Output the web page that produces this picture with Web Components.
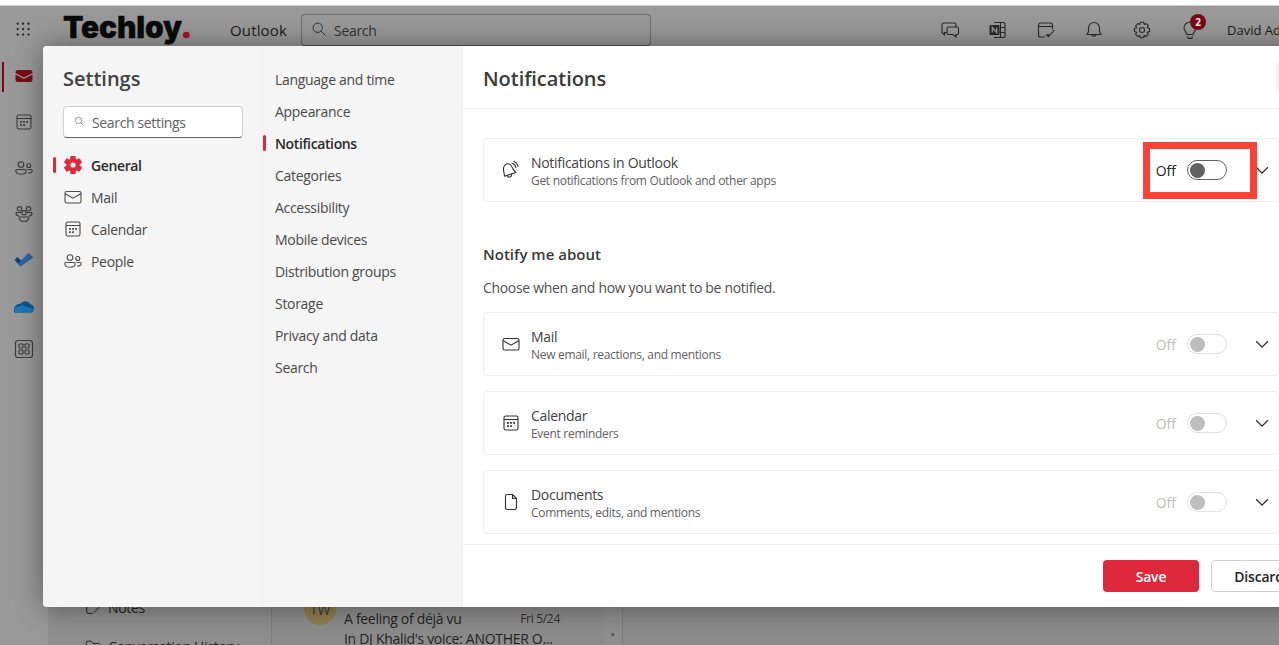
<!DOCTYPE html>
<html lang="en"><head><meta charset="utf-8"><title>Outlook settings</title>
<style>
html,body{margin:0;padding:0;height:100%;overflow:hidden;background:#fff}
body{font-family:"Open Sans","Liberation Sans",sans-serif;letter-spacing:-.3px;color:#323130}
</style></head><body>
<app-shell></app-shell>
<script>
function gearPath(){
  const pts=[];const P=(r,a)=>{const t=a*Math.PI/180;return (10+r*Math.cos(t)).toFixed(2)+' '+(10+r*Math.sin(t)).toFixed(2);};
  for(let i=0;i<6;i++){const c=-90+i*60;pts.push(P(6.6,c-26),P(9.4,c-15),P(9.4,c+15),P(6.6,c+26));}
  return 'M'+pts.join('L')+'ZM10 7.400A2.600 2.600 0 1 0 10 12.600 2.600 2.600 0 0 0 10 7.400Z';
}
const ICONS={
 grid:'<g fill="currentColor"><circle cx="3" cy="3" r="1.25"/><circle cx="9" cy="3" r="1.25"/><circle cx="15" cy="3" r="1.25"/><circle cx="3" cy="9" r="1.25"/><circle cx="9" cy="9" r="1.25"/><circle cx="15" cy="9" r="1.25"/><circle cx="3" cy="15" r="1.25"/><circle cx="9" cy="15" r="1.25"/><circle cx="15" cy="15" r="1.25"/></g>',
 search:'<g fill="none" stroke="currentColor" stroke-width="1.1"><circle cx="7.500" cy="7.500" r="5.200"/><path d="M11.300 11.300 16 16"/></g>',
 chat:'<g fill="none" stroke="currentColor" stroke-width="1.100"><path d="M7 12.500H4.500V15L2 12.500V4.500A1.500 1.500 0 0 1 3.500 3H14.500A1.500 1.500 0 0 1 16 4.500V7"/><path d="M8.500 7H17A1.500 1.500 0 0 1 18.500 8.500V13A1.500 1.500 0 0 1 17 14.500H16V17L13 14.500H8.500A1.500 1.500 0 0 1 7 13V8.500A1.500 1.500 0 0 1 8.500 7Z"/></g>',
 onenote:'<g fill="none" stroke="currentColor" stroke-width="1.100"><path d="M6 2.500H16A1 1 0 0 1 17 3.500V16.500A1 1 0 0 1 16 17.500H6"/><path d="M12.500 2.500V17.500M12.500 7.500H17M12.500 12.500H17"/></g><rect x="1.500" y="5" width="10" height="10" rx="1" fill="currentColor"/><path d="M4.300 12.500V7.500L8.700 12.500V7.500" fill="none" stroke="#999" stroke-width="1.300"/>',
 taskcal:'<g fill="none" stroke="currentColor" stroke-width="1.100"><path d="M9 17H4.500A2 2 0 0 1 2.500 15V5A2 2 0 0 1 4.500 3H14.500A2 2 0 0 1 16.500 5V9.500"/><path d="M2.500 6.500H16.500"/><path d="M10 14.500 12.300 16.800 18.500 10M11.500 14 13 15.500"/></g>',
 bell:'<g fill="none" stroke="currentColor" stroke-width="1.100"><path d="M10 2.500A5.500 5.500 0 0 0 4.500 8V11.500L3 14.500H17L15.500 11.500V8A5.500 5.500 0 0 0 10 2.500Z" stroke-linejoin="round"/><path d="M7.800 14.500A2.300 2.300 0 0 0 12.200 14.500"/></g>',
 gear:'<g fill="none" stroke="currentColor" stroke-width="1.100" stroke-linejoin="round"><path d="M8.300 2.300H11.700L12.200 4.500 14.300 3.600 16.400 5.900 15.200 7.800 17.600 8.500V11.500L15.200 12.200 16.400 14.100 14.300 16.400 12.200 15.500 11.700 17.700H8.300L7.800 15.500 5.700 16.400 3.600 14.100 4.800 12.200 2.400 11.500V8.500L4.800 7.800 3.600 5.900 5.700 3.600 7.800 4.500Z"/><circle cx="10" cy="10" r="2.500"/></g>',
 bulb:'<g fill="none" stroke="currentColor" stroke-width="1.100"><path d="M7 14.500C7 12.500 4 11.500 4 8A6 6 0 0 1 16 8C16 11.500 13 12.500 13 14.500Z"/><path d="M7.500 16.500A2.500 2 0 0 0 12.500 16.500"/></g>',
 mailfill:'<path d="M1.500 6.500A2.500 2.500 0 0 1 4 4H16A2.500 2.500 0 0 1 18.500 6.500V7L10 11.500 1.500 7Z" fill="currentColor"/><path d="M1.500 8.600 10 13 18.500 8.600V13.500A2.500 2.500 0 0 1 16 16H4A2.500 2.500 0 0 1 1.500 13.500Z" fill="currentColor"/>',
 mail:'<g fill="none" stroke="currentColor" stroke-width="1.100"><rect x="2" y="4.500" width="16" height="11.500" rx="1.800"/><path d="M2.300 6.800 10 11.200 17.700 6.800"/></g>',
 cal:'<g fill="none" stroke="currentColor" stroke-width="1.100"><rect x="3" y="3" width="14" height="14" rx="1.800"/><path d="M3 6.500H17"/></g><g fill="currentColor"><rect x="6" y="9" width="1.800" height="1.800"/><rect x="9.100" y="9" width="1.800" height="1.800"/><rect x="12.200" y="9" width="1.800" height="1.800"/><rect x="6" y="12.200" width="1.800" height="1.800"/><rect x="9.100" y="12.200" width="1.800" height="1.800"/></g>',
 people:'<g fill="none" stroke="currentColor" stroke-width="1.100"><circle cx="7" cy="6.500" r="2.800"/><circle cx="14.800" cy="7.500" r="2"/><path d="M1.800 12.800A1.300 1.300 0 0 1 3 11.500H11A1.300 1.300 0 0 1 12.200 12.800C12.200 15 10 16.300 7 16.300S1.800 15 1.800 12.800Z"/><path d="M13.500 11.500H17A1.200 1.200 0 0 1 18.200 12.700C18.200 14.300 16.500 15.200 14 15"/></g>',
 groups:'<g fill="none" stroke="currentColor" stroke-width="1.100"><circle cx="5.500" cy="4.800" r="2.200"/><circle cx="14.500" cy="4.800" r="2.200"/><circle cx="10" cy="8.800" r="2.200"/><path d="M6 13H14A.8.8 0 0 1 14.800 13.800C14.800 16 12.800 17.500 10 17.500S5.200 16 5.200 13.800A.8.8 0 0 1 6 13Z"/><path d="M7 8.500H2.800A.8.8 0 0 0 2 9.300C2 11 3.500 12 5 12M13 8.500H17.200A.8.8 0 0 1 18 9.300C18 11 16.500 12 15 12"/></g>',
 apps:'<g fill="none" stroke="currentColor" stroke-width="1.200"><rect x="1.500" y="1.500" width="17" height="17" rx="2.500"/><rect x="5" y="5" width="4" height="4" rx=".8"/><rect x="11" y="5" width="4" height="4" rx=".8"/><rect x="5" y="11" width="4" height="4" rx=".8"/><rect x="11" y="11" width="4" height="4" rx=".8"/></g>',
 todo:'<path d="M.5 10 3.500 7 8.500 12 6.500 16.500Z" fill="#10407f"/><path d="M6.500 16.500 3.800 13.800 14.500 3 19.500 7.500Z" fill="#2a66a6"/>',
 cloud:'<path d="M3.500 16.500A3 3 0 0 1 1 11 4 4 0 0 1 6 8 6 6 0 0 1 16.300 8.300 4.200 4.200 0 0 1 19.800 13 3.500 3.500 0 0 1 17 16.500Z" fill="#0f568f"/><path d="M3.500 16.500A3 3 0 0 1 1 11.500L8.500 9.200 19.800 13A3.500 3.500 0 0 1 17 16.500Z" fill="#1878b8"/>',
 gearfill:'<path fill-rule="evenodd" d="'+gearPath()+'" fill="currentColor"/>',
 ring:'<g fill="none" stroke="currentColor" stroke-width="1.100" stroke-linejoin="round" stroke-linecap="round"><path d="M3 12.500C1.500 8.500 3 4.500 6 3.800 9 3.200 10.500 5.500 11.500 8 12.300 10 13.500 11.500 15 12.500L3.500 16.200Z"/><path d="M6 15.400A2.300 2.300 0 0 0 10.500 14"/><path d="M11 3.200A6 6 0 0 1 15 7.800M13 1.200A8 8 0 0 1 17 6.300"/></g>',
 doc:'<path d="M6 2.500H11.500L15.500 6.500V15.500A2 2 0 0 1 13.500 17.500H6.500A2 2 0 0 1 4.500 15.500V4A1.500 1.500 0 0 1 6 2.500ZM11.500 2.500V6.500H15.500" fill="none" stroke="currentColor" stroke-width="1.100" stroke-linejoin="round"/>',
 chev:'<path d="M3.500 7 10 13.500 16.500 7" fill="none" stroke="currentColor" stroke-width="1.500"/>',
 note:'<g fill="none" stroke="currentColor" stroke-width="1.100"><path d="M9 16H4.500A1.500 1.500 0 0 1 3 14.500V4.500A1.500 1.500 0 0 1 4.500 3H14.500A1.500 1.500 0 0 1 16 4.500V8"/><path d="M10 16 17 9"/></g>',
 folder:'<path d="M2.500 16V5A1.500 1.500 0 0 1 4 3.500H8L10 6H16A1.500 1.500 0 0 1 17.500 7.500V16" fill="none" stroke="currentColor" stroke-width="1.100"/>'
};
function def(name,css,html,init){
  customElements.define(name,class extends HTMLElement{
    constructor(){super();const s=this.attachShadow({mode:'open'});const t=document.createElement('template');t.innerHTML='<style>'+css+'</style>'+(typeof html==='function'?html(this):html);s.appendChild(t.content.cloneNode(true));}
    connectedCallback(){ if(init&&!this._i){this._i=1;init(this,this.shadowRoot);} }
  });
}
def('x-icon',':host{display:inline-flex;flex:none;width:var(--s,20px);height:var(--s,20px)}svg{width:100%;height:100%;display:block}','<svg viewBox="0 0 20 20" aria-hidden="true"></svg>',(h,s)=>{s.querySelector('svg').innerHTML=ICONS[h.getAttribute('n')]||'';});

def('app-header',`:host{display:flex;align-items:center;height:41px;box-sizing:border-box;padding-top:9px;background:#999;color:#111;flex:none;position:relative;box-shadow:inset 0 1px #cfcfcf}
.waffle{margin-left:15px;--s:18px;color:#1c1c1c}
.logo{font:900 30px/26px Inter,"Liberation Sans",sans-serif;letter-spacing:-.2px;-webkit-text-stroke:.3px #0a0a0a;color:#0a0a0a;margin-left:30px;width:167px;flex:none;white-space:nowrap;height:32px}
.logo b{color:#a5101f;-webkit-text-stroke:.6px #a5101f;font-weight:900}
.app{font-size:15px;font-weight:500;width:71px;flex:none;letter-spacing:.15px;color:#1b1a19}
.search{width:348px;height:30px;flex:none;border:1px solid #6f6f6f;border-bottom-color:#555;border-radius:4px;display:flex;align-items:center;gap:5px;font-size:14px;color:#333}
.search x-icon{--s:18px;margin-left:9px;color:#333}
.tools{display:flex;align-items:center;margin-left:275px;flex:none;white-space:nowrap}
.t{width:48px;flex:none;display:flex;justify-content:center;color:#2a2a2a;--s:20px;position:relative}
.badge{position:absolute;left:24px;top:-6px;width:16px;height:16px;border-radius:50%;background:#7a0b16;color:#e9e9e9;font-size:10px;font-weight:700;display:flex;align-items:center;justify-content:center}
.user{font-size:13px;white-space:nowrap;color:#1b1a19;margin-left:13px;letter-spacing:0}`,
`<x-icon class="waffle" n="grid"></x-icon><div class="logo">Techloy<b>.</b></div><div class="app">Outlook</div>
<div class="search"><x-icon n="search"></x-icon><span>Search</span></div>
<div class="tools"><div class="t"><x-icon n="chat"></x-icon></div><div class="t"><x-icon n="onenote"></x-icon></div><div class="t"><x-icon n="taskcal"></x-icon></div><div class="t"><x-icon n="bell"></x-icon></div><div class="t"><x-icon n="gear"></x-icon></div><div class="t"><x-icon n="bulb"></x-icon><span class="badge">2</span></div><div class="user">David&nbsp;Adeleke</div></div>`);

def('app-rail',`:host{display:flex;flex-direction:column;width:48px;flex:none;background:#999;padding-top:20px;box-sizing:border-box;position:relative;color:#3c3c3c}
.i{height:46px;display:flex;justify-content:center;align-items:flex-start;--s:20px;position:relative}
.a{color:#7b0a14}
.a::before{content:"";position:absolute;left:2px;top:-4px;width:2px;height:30px;background:#7b0a14}`,
`<div class="i a"><x-icon n="mailfill"></x-icon></div><div class="i"><x-icon n="cal"></x-icon></div><div class="i"><x-icon n="people"></x-icon></div><div class="i"><x-icon n="groups"></x-icon></div><div class="i"><x-icon n="todo"></x-icon></div><div class="i" style="height:43px"><x-icon n="cloud"></x-icon></div><div class="i"><x-icon n="apps"></x-icon></div>`);

def('folder-pane',`:host{display:flex;flex-direction:column;width:223px;flex:none;background:#8e8e8e;padding:552px 0 0 36px;box-sizing:border-box;gap:20px;font-size:14px;color:#222}
.f{display:flex;align-items:center;gap:6px;height:20px;--s:18px;white-space:nowrap}`,
`<div class="f"><x-icon n="note"></x-icon><span>Notes</span></div><div class="f"><x-icon n="folder"></x-icon><span>Conversation History</span></div>`);

def('message-list',`:host{display:block;width:352px;flex:none;background:#8b8b8b;border-left:1px solid #7c7c7c;border-right:1px solid #7c7c7c;box-sizing:border-box;padding-top:547px;font-size:14px;color:#232323;position:relative}
.row{display:flex;padding-left:32px;gap:8px}
.av{width:32px;height:32px;border-radius:50%;background:#8f7d4d;color:#3a3a3a;display:flex;align-items:center;justify-content:center;font-size:14px;flex:none}
.m{width:216px;padding-top:16px}
.l{display:flex;justify-content:space-between;line-height:20px;white-space:nowrap}
.d{font-size:12px;color:#2e2e2e}
.sb{position:absolute;right:0;top:0;bottom:0;width:18px;background:#8e8e8e;color:#444;font-size:7px;display:flex;align-items:flex-end;justify-content:center;padding-bottom:6px}`,
`<div class="row"><div class="av">TW</div><div class="m"><div class="l"><span>A feeling of déjà vu</span><span class="d">Fri 5/24</span></div><div class="l">In DJ Khalid's voice: ANOTHER O...</div></div></div><div class="sb">▾</div>`);

def('nav-item',`:host{display:flex;align-items:center;height:32px;font-size:14px;color:#4a4948;position:relative;white-space:nowrap;gap:8px;--s:20px}
:host([active]){font-weight:600;color:#2b2a29;letter-spacing:-.38px}
:host([active])::before{content:"";position:absolute;left:var(--bar,-10px);top:8px;width:3px;height:16px;border-radius:2px;background:#e0283c}
::slotted(x-icon){color:#4a4948}
:host([active]) ::slotted(x-icon){color:#e0283c}`,'<slot name="icon"></slot><slot></slot>');

def('settings-search',`:host{display:flex;align-items:center;box-sizing:border-box;width:180px;height:32px;background:#fff;border:1px solid #d1d1d1;border-bottom-color:#616161;border-radius:4px;padding-left:10px;gap:6px;font-size:14px;letter-spacing:-.35px;color:#616161;--s:12px}`,
`<x-icon n="search"></x-icon><span>Search settings</span>`);

def('toggle-switch',`:host{display:flex;align-items:center;gap:11px;font-size:14px;letter-spacing:0;color:#242424}
.tr{width:40px;height:20px;box-sizing:border-box;border:1px solid #616161;border-radius:10px;background:#fff;display:flex;align-items:center;padding-left:2px}
.k{width:15px;height:15px;border-radius:50%;background:#616161}
:host([disabled]){color:#bdbdbd}
:host([disabled]) .tr{border-color:#e0e0e0}
:host([disabled]) .k{background:#bdbdbd}`,
`<span>Off</span><div class="tr"><div class="k"></div></div>`);

def('notif-card',`:host{display:flex;align-items:center;box-sizing:border-box;height:64px;width:796px;border:1px solid #efefef;border-radius:4px;background:#fff;padding-left:17px;position:relative}
.ic{--s:20px;color:#323130;margin-right:10px;width:20px}
.tx{flex:1;min-width:0;padding-top:2px}
.t{font-size:14px;line-height:20px;color:#424242}
.s{font-size:12px;line-height:16px;color:#616161}
.ch{--s:18px;color:#323130;margin-left:26px;margin-right:7px}
toggle-switch{flex:none}`,
h=>`<x-icon class="ic" n="${h.getAttribute('icon')}"></x-icon><div class="tx"><div class="t">${h.getAttribute('label')}</div><div class="s">${h.getAttribute('sub')}</div></div><toggle-switch ${h.hasAttribute('on')?'':'disabled'}></toggle-switch><x-icon class="ch" n="chev"></x-icon>`);

def('settings-dialog',`:host{position:absolute;left:43px;top:46px;width:1300px;height:561px;display:flex;background:#fff;border-radius:4px 0 0 4px;box-shadow:0 0 28px rgba(0,0,0,.42);overflow:hidden}
.c1{width:220px;background:#f5f5f5;border-right:1px solid #f0f0f0;box-sizing:border-box;flex:none;padding:20px 0 0 20px}
h1{font-size:20px;font-weight:600;margin:0 0 14px;line-height:26px;color:#424242;letter-spacing:0}
.nav{margin-top:11px;--bar:-10px}
.c2{width:200px;background:#f5f5f5;border-right:1px solid #f0f0f0;box-sizing:border-box;flex:none;padding:18px 0 0 12px;--bar:-12px;margin-top:-1px}
.c3{flex:1;display:flex;flex-direction:column;min-width:0}
.h{height:62px;flex:none;border-bottom:1px solid #eee;padding-left:20px;display:flex;align-items:center;position:relative}
.h h2{font-size:20px;font-weight:600;margin:0;color:#3a3a3a;letter-spacing:-.05px;position:relative;top:1px}
.x{position:absolute;left:813px;top:16px;width:30px;height:30px;background:#f3f3f3;border-radius:4px}
.b{flex:1;padding:29px 0 0 20px;min-height:0;display:flex;flex-direction:column}
h3{font-size:15px;font-weight:600;line-height:20px;margin:42px 0 0;color:#3a3a3a;letter-spacing:0}
p{margin:14px 0 14px;font-size:14px;line-height:20px;color:#505050;letter-spacing:-.32px}
.list{display:flex;flex-direction:column;gap:15px}
.f{height:63px;flex:none;border-top:1px solid #eee;box-sizing:border-box;display:flex;align-items:flex-start;padding:15px 0 0 640px;gap:12px}
.btn{box-sizing:border-box;height:32px;border-radius:4px;display:flex;align-items:center;justify-content:center;font-size:14px;font-weight:600;letter-spacing:-.2px}
.sv{width:96px;background:#e0283c;color:#fff}
.ds{width:96px;background:#fff;border:1px solid #d1d1d1;color:#242424}`,
`<div class="c1"><h1>Settings</h1><settings-search></settings-search><div class="nav">
<nav-item active><x-icon slot="icon" n="gearfill"></x-icon>General</nav-item>
<nav-item><x-icon slot="icon" n="mail"></x-icon>Mail</nav-item>
<nav-item><x-icon slot="icon" n="cal"></x-icon>Calendar</nav-item>
<nav-item><x-icon slot="icon" n="people"></x-icon>People</nav-item></div></div>
<div class="c2"><nav-item>Language and time</nav-item><nav-item>Appearance</nav-item><nav-item active>Notifications</nav-item><nav-item>Categories</nav-item><nav-item>Accessibility</nav-item><nav-item>Mobile devices</nav-item><nav-item>Distribution groups</nav-item><nav-item>Storage</nav-item><nav-item>Privacy and data</nav-item><nav-item>Search</nav-item></div>
<div class="c3"><div class="h"><h2>Notifications</h2><div class="x"></div></div>
<div class="b"><notif-card on icon="ring" label="Notifications in Outlook" sub="Get notifications from Outlook and other apps"></notif-card>
<h3>Notify me about</h3><p>Choose when and how you want to be notified.</p>
<div class="list"><notif-card icon="mail" label="Mail" sub="New email, reactions, and mentions"></notif-card><notif-card icon="cal" label="Calendar" sub="Event reminders"></notif-card><notif-card icon="doc" label="Documents" sub="Comments, edits, and mentions"></notif-card></div></div>
<div class="f"><div class="btn sv">Save</div><div class="btn ds">Discard</div></div></div>`);

def('callout-box',`:host{position:absolute;left:1143px;top:142px;width:114px;height:57px;box-sizing:border-box;border:7px solid #ff4136;pointer-events:none}`,'');

def('app-shell',`:host{display:flex;flex-direction:column;width:1279px;height:645px;position:relative;overflow:hidden;background:#fff;padding-top:5px;box-sizing:border-box}
.main{display:flex;flex:1;min-height:0;overflow:hidden}
.rest{flex:1;background:#8b8b8b}`,
`<app-header></app-header><div class="main"><app-rail></app-rail><folder-pane></folder-pane><message-list></message-list><div class="rest"></div></div><settings-dialog></settings-dialog><callout-box></callout-box>`);
</script></body></html>
